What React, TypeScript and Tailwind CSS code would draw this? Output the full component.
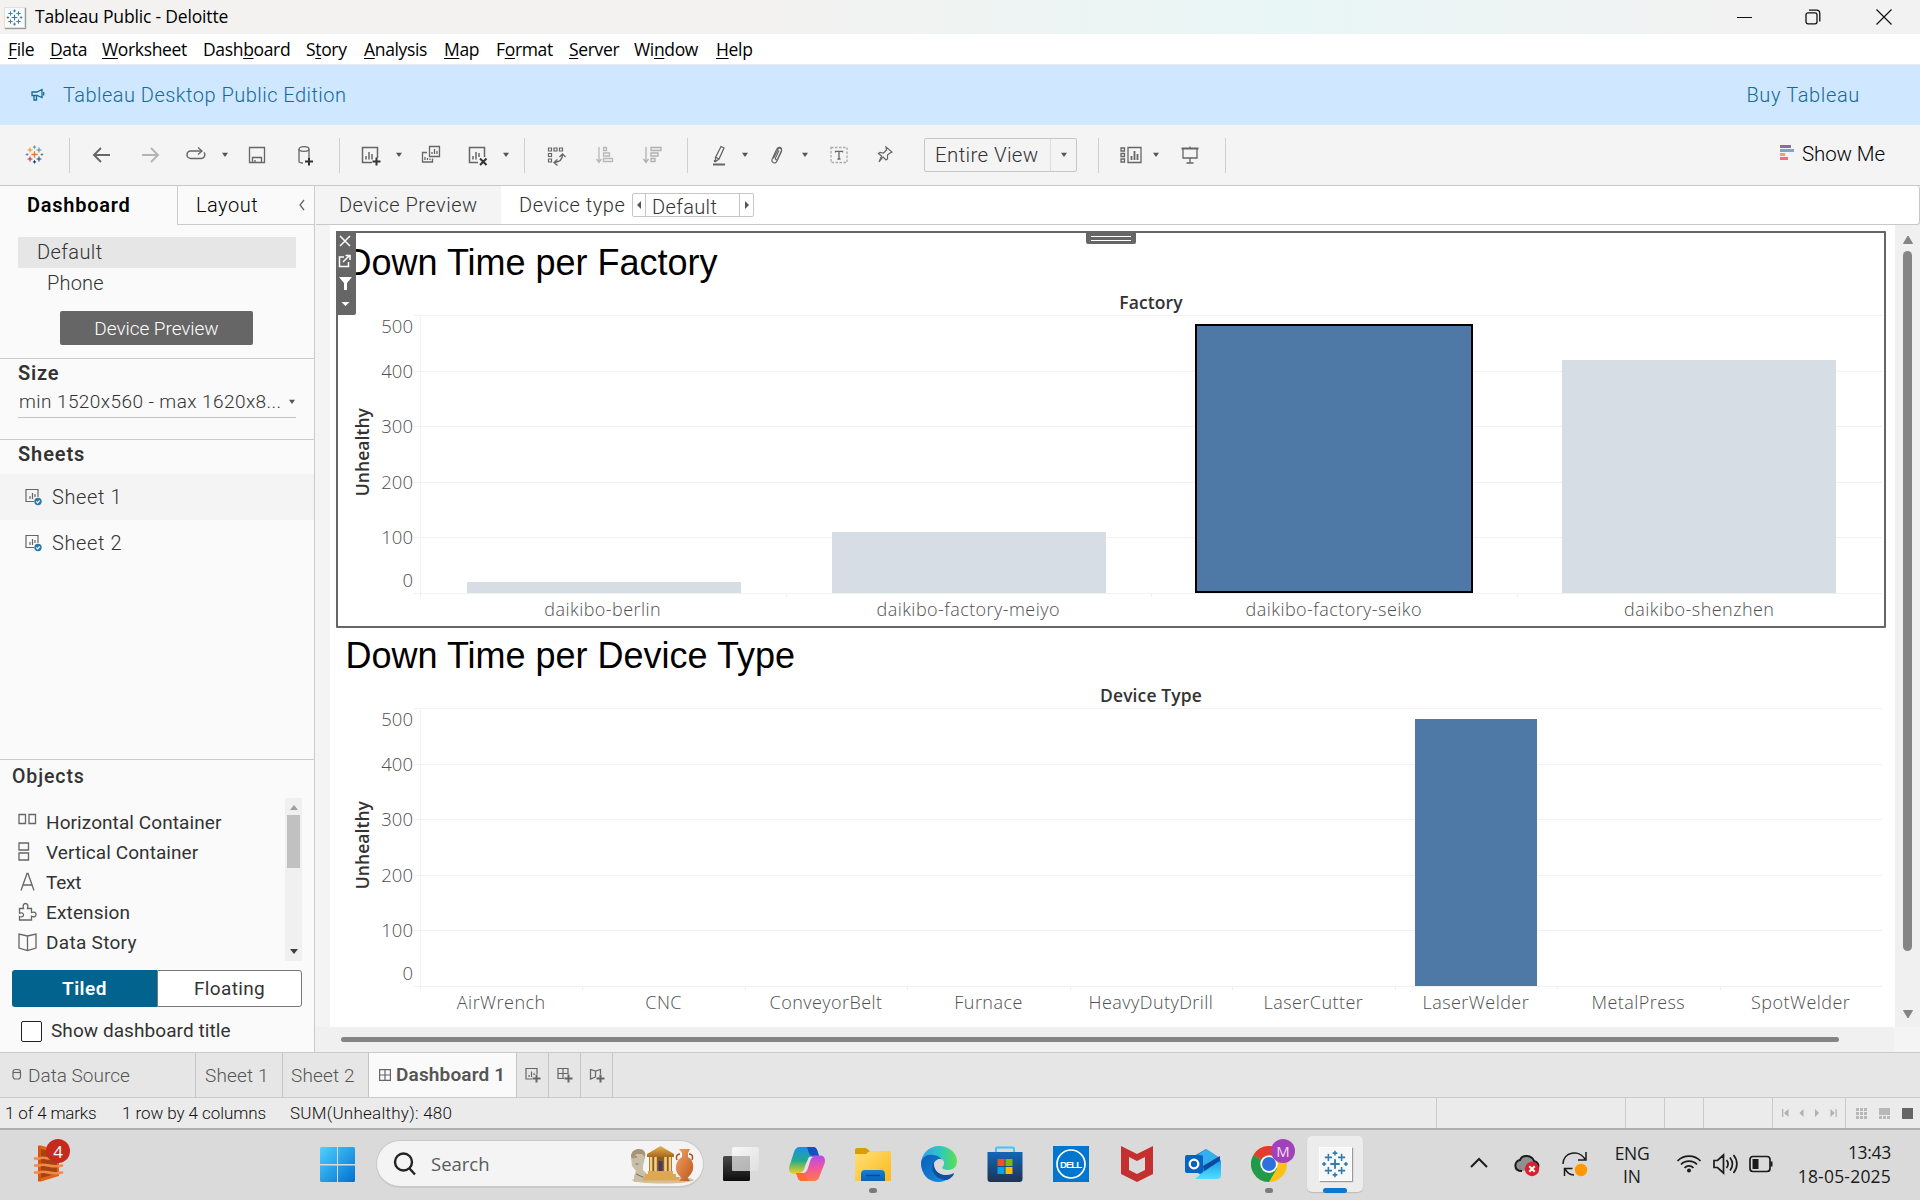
import React from "react";

type P = { children?: React.ReactNode; className?: string };

function Ico({ children, className = "", size = 24 }: P & { size?: number }) {
  return (
    <svg
      width={size}
      height={size}
      viewBox={`0 0 ${size} ${size}`}
      fill="none"
      stroke="#666"
      strokeWidth="1.3"
      className={"block shrink-0 " + className}
    >
      {children}
    </svg>
  );
}

function Caret({ className = "" }: P) {
  return (
    <svg width="8" height="6" viewBox="0 0 8 6" className={"block shrink-0 " + className}>
      <path d="M1 .8h6L4 5z" fill="#555" />
    </svg>
  );
}

function Sep({ className = "" }: P) {
  return <div className={"h-[35px] w-px shrink-0 bg-[#cfcfcf] " + className} />;
}

function TableauMark({ size, colors, className = "" }: { size: number; colors: string[]; className?: string }) {
  const cross = (x: number, y: number, r: number) => `M${x - r} ${y}h${2 * r}M${x} ${y - r}v${2 * r}`;
  return (
    <svg width={size} height={size} viewBox="0 0 36 36" fill="none" strokeWidth="2" className={"block shrink-0 " + className}>
      <path d={cross(18, 18, 6)} stroke={colors[0]} strokeWidth="2.4" />
      <path d={cross(9.5, 9.5, 4.6)} stroke={colors[1]} />
      <path d={cross(26.5, 9.5, 4.6)} stroke={colors[2]} />
      <path d={cross(9.5, 26.5, 4.6)} stroke={colors[3]} />
      <path d={cross(26.5, 26.5, 4.6)} stroke={colors[4]} />
      <path d={cross(18, 4, 3)} stroke={colors[5]} />
      <path d={cross(18, 32, 3)} stroke={colors[4]} />
      <path d={cross(4, 18, 2.6)} stroke={colors[6]} />
      <path d={cross(32, 18, 2.6)} stroke={colors[6]} />
    </svg>
  );
}

const BLUE = ["#2f7cae", "#2f7cae", "#2f7cae", "#2f7cae", "#2f7cae", "#2f7cae", "#2f7cae"];
const MULTI = ["#e8762c", "#eb912c", "#5b879b", "#c72035", "#1f447e", "#7099a6", "#59879b"];

function TitleBar() {
  return (
    <div className="flex h-[34px] items-center bg-linear-to-r from-[#f3f2f1] from-40% via-[#e8f6f5] via-67% to-[#f2f2f2] to-90% pl-1">
      <div className="flex h-[21px] w-[21px] items-center justify-center border border-[#e0e0e0] bg-[#fafafa] shadow-[1px_1px_1px_#999]">
        <TableauMark size={17} colors={BLUE} />
      </div>
      <span className="ml-[10px] pb-px text-[17.5px] leading-none tracking-[-0.17px] text-black">Tableau Public - Deloitte</span>
      <div className="ml-auto flex items-center pr-[28px]">
        <svg width="15" height="16" viewBox="0 0 15 16" stroke="#111" className="block"><path d="M0 8.500h15" /></svg>
        <svg width="16" height="16" viewBox="0 0 16 16" fill="none" stroke="#111" strokeWidth="1.3" className="ml-[53px] block">
          <rect x="1" y="3.8" width="11" height="11" rx="2" />
          <path d="M4 1.200h7.500a3.300 3.300 0 0 1 3.300 3.300v8" />
        </svg>
        <svg width="16" height="16" viewBox="0 0 16 16" stroke="#111" strokeWidth="1.2" className="ml-[55px] block"><path d="M.5.5l15 15M15.500.5l-15 15" /></svg>
      </div>
    </div>
  );
}

const MENUS: [string, string, string, string][] = [
  ["", "F", "ile", "w-[42px]"],
  ["", "D", "ata", "w-[52px]"],
  ["", "W", "orksheet", "w-[101px]"],
  ["Dash", "b", "oard", "w-[103px]"],
  ["S", "t", "ory", "w-[58px]"],
  ["", "A", "nalysis", "w-[80px]"],
  ["", "M", "ap", "w-[52px]"],
  ["F", "o", "rmat", "w-[73px]"],
  ["", "S", "erver", "w-[65px]"],
  ["Wi", "n", "dow", "w-[82px]"],
  ["", "H", "elp", "w-[60px]"],
];

function MenuBar() {
  return (
    <div className="flex h-[31px] items-center border-b border-[#ececec] bg-white pt-px pl-2 text-[17.5px] leading-none tracking-[-0.34px] text-black">
      {MENUS.map(([a, u, b, w], i) => (
        <span key={i} className={"shrink-0 whitespace-nowrap " + w}>
          {a}
          <span className="underline decoration-1 underline-offset-2">{u}</span>
          {b}
        </span>
      ))}
    </div>
  );
}

function Banner() {
  return (
    <div className="flex h-[60px] items-center bg-[#cfe8ff] pl-[31px] font-[Roboto] text-[20px] leading-none font-light text-[#146a99]">
      <svg width="14" height="14" viewBox="0 0 14 14" fill="none" stroke="#1a6a9c" strokeWidth="1.3">
        <path d="M1 4h5l5-2.500v8L6 7.500H1zM3 7.500V12h2.500V7.500M12.700 4v3.500" />
      </svg>
      <span className="ml-[18px] tracking-[0.47px]">Tableau Desktop Public Edition</span>
      <span className="mr-[60px] ml-auto tracking-[0.65px]">Buy Tableau</span>
    </div>
  );
}

function Toolbar() {
  return (
    <div className="flex h-[61px] items-center border-b border-[#c8c8c8] bg-[#f4f4f4] pl-[22px]">
      <div className="flex w-6 justify-center pb-px"><TableauMark size={19} colors={MULTI} /></div>
      <Sep className="ml-[23px]" />
      <Ico className="mb-px ml-5"><path d="M20 12H5M11 5l-7 7 7 7" strokeWidth="1.900" /></Ico>
      <Ico className="mb-px ml-6"><path d="M4 12h15M13 5l7 7-7 7" stroke="#b4b4b4" strokeWidth="1.900" /></Ico>
      <Ico className="mb-px ml-[22px]"><path d="M18 8H6.700a3.700 3.700 0 0 0 0 7.400h10.600a3.700 3.700 0 0 0 2.800-6" strokeWidth="1.500" /><path d="M14 4.500L18 8l-4 3.500" /></Ico>
      <Caret className="ml-[13px]" />
      <Ico className="ml-4"><path d="M4.500 4.500h15v15h-15zM7.500 19.500v-5h9v5M10 19.500v-2.500" /></Ico>
      <Ico className="ml-[23px]"><path d="M7 6v12.500c0 1 2 1.500 4 1.500M17 6v8" /><ellipse cx="12" cy="6" rx="5" ry="2.300" /><path d="M17 14.500v8M13 18.500h8" stroke="#333" strokeWidth="2" /></Ico>
      <Sep className="ml-[23px]" />
      <Ico className="ml-[18px]"><path d="M14 19.500H4.500v-15h15V15M8 16.500V13M11 16.500V9M14 16.500V11" strokeWidth="1.500" /><path d="M18.500 14.500v8M14.500 18.500h8" stroke="#333" strokeWidth="2" /></Ico>
      <Caret className="ml-[13px]" />
      <Ico className="ml-4"><path d="M10.500 3.500h10v10h-10zM13 11V9M15.500 11V6M18 11V8M8 9.500H3.500v9.500h10v-3.500M6 17v-3M8.500 17v-2M11 17v-1.500" /></Ico>
      <Ico className="ml-[22px]"><path d="M13 19.500H4.500v-15h15V14M8 16.500V13M11 16.500V9M14 14V10" strokeWidth="1.500" /><path d="M15 15.500l6.500 6.500M21.500 15.500L15 22" stroke="#333" strokeWidth="2" /></Ico>
      <Caret className="ml-[13px]" />
      <Sep className="ml-[14px]" />
      <Ico className="ml-[19px]"><path d="M4.500 5h3v3h-3zM10 5h3v3h-3zM15.500 5h3v3h-3zM4.500 10.500h3v3h-3zM4.500 16h3v3h-3z" strokeWidth="1.200" /><path d="M18.500 11.500c0 4.500-3 7.500-8 8M15.500 14l3-3 3 3M13.500 16.500l-3.500 3 3.500 3" /></Ico>
      <Ico className="ml-[25px]"><path d="M6 4v15M3.500 16L6 19.500 8.500 16M10.500 4.500h3v3h-3zM10.500 10h6v3h-6zM10.500 15.500h9v3h-9z" stroke="#b8b8b8" /></Ico>
      <Ico className="ml-6"><path d="M5 4v15M2.500 16L5 19.500 7.500 16M10 4.500h10v3H10zM10 10h7v3h-7zM10 15.500h4v3h-4z" stroke="#b0b0b0" /></Ico>
      <Sep className="ml-[22px]" />
      <Ico className="ml-5"><path d="M13 3.500l3 1.500-5 11-3.500 2.500v-4zM7.500 14l3.300 2M6.500 17v2" /><path d="M5 21.500h12" strokeWidth="2" /></Ico>
      <Caret className="ml-[9px]" />
      <Ico className="ml-4"><path d="M9.500 15.500l4.500-9M13.800 6.500c1.200-2.500 4.800-1 3.700 2l-4.500 9.500c-1.500 3.500-6 1.500-5-1.500l4.500-10c2-3.500 6-2.500 5 1l-4 8.500c-.8 1.500-2.700.8-2-1l3.500-7.500" strokeWidth="1.100" transform="translate(-1 0)" /></Ico>
      <Caret className="ml-3" />
      <Ico className="ml-[18px]"><path d="M4 4.500h16v15H4z" stroke="#aaa" strokeDasharray="2.500 1.500" /><path d="M8.500 9.500V8.300h7v1.200M12 8.300v8M10.500 16h3" /></Ico>
      <Ico className="ml-[22px]"><path d="M13 4l6 5-2 1-2.500 2v4l-1.500 1-3-3-4 5 2.500-6-3-2.500 1.500-1 3.500.5L13.500 7z" strokeWidth="1.200" /></Ico>
      <div className="ml-[27px] flex h-[34px] w-[153px] items-center rounded-[2px] border border-[#c6c6c6] font-[Roboto] text-[20.500px] leading-none font-light text-[#333]">
        <span className="w-[125px] pl-[10px] text-[20.5px] tracking-[0.35px]">Entire View</span>
        <div className="flex h-full flex-1 items-center justify-center border-l border-[#ddd]"><Caret /></div>
      </div>
      <Sep className="ml-[21px]" />
      <Ico className="ml-5"><path d="M2 5h3.500v3H2zM2 10.500h3.500v3H2zM2 16h3.500v3H2zM9 4.500h13v15H9z" /><path d="M12.500 17v-4M15.500 17V8M18.500 17v-6" strokeWidth="1.800" /></Ico>
      <Caret className="ml-[9px]" />
      <Ico className="mb-px ml-[18px]"><path d="M3.500 5.500h17" strokeWidth="2" /><path d="M5 6v9h14V6M12 3.500V5M12 15v4.500M8.500 20h7" /></Ico>
      <Sep className="ml-[23px]" />
      <svg width="14" height="16" viewBox="0 0 14 16" className="mb-1 ml-auto block">
        <path d="M0 0h11v3H0z" fill="#85709b" /><path d="M0 4h14v3H0z" fill="#80a2cf" /><path d="M0 8h5v3H0z" fill="#f5a06a" /><path d="M0 12h8v3H0z" fill="#fb6a80" />
      </svg>
      <span className="mr-[36px] ml-2 w-[82px] pb-[2px] font-[Roboto] text-[20.5px] leading-none font-light tracking-[-0.1px] whitespace-nowrap text-black">Show Me</span>
    </div>
  );
}

function SheetIcon({ className = "" }: P) {
  return (
    <svg width="18" height="18" viewBox="0 0 18 18" fill="none" stroke="#666" strokeWidth="1.2" className={"block " + className}>
      <path d="M9 13.500H1v-12h12V9M5 11V8M7.500 11V5M10 9V6" />
      <circle cx="13" cy="13.500" r="3.700" fill="#2c7ba3" stroke="none" />
      <path d="M11.300 13.500l1.300 1.300 2-2.300" stroke="#fff" />
    </svg>
  );
}

const OBJECTS: { label: string; cls: string; icon: React.ReactNode }[] = [
  { label: "Horizontal Container", cls: "tracking-[0.08px]", icon: <path d="M1 1.500h6.500v9H1zM11 1.500h6.500v9H11z" transform="translate(0 1)" /> },
  { label: "Vertical Container", cls: "tracking-[0.07px]", icon: <path d="M1 1h9.500v7H1zM1 11h9.500v7H1z" /> },
  { label: "Text", cls: "tracking-[-0.2px]", icon: <path d="M3 18.500L9 1.500h1l6 17M5 13h9" /> },
  { label: "Extension", cls: "tracking-[0.15px]", icon: <path d="M1.500 6.500h4c-1-3 0-5 2-5s3 2 2 5h4v4c3-1 4.500 0 4.500 2s-2 2.800-4.500 1.800v3.700H1.500v-3.500c3 1 4-.3 4-1.800s-1.500-2.500-4-1.500z" /> },
  { label: "Data Story", cls: "tracking-[0.3px]", icon: <path d="M9.500 4L1 2v14l8.500 2.500L18 16V2zM9.500 4v14" /> },
];

function Sidebar() {
  return (
    <aside className="flex w-[315px] shrink-0 flex-col border-r border-[#cbcbcb] bg-[#fafafa] font-[Roboto] leading-none text-[#333]">
      <div className="flex h-[39px] shrink-0 text-[20px] text-black">
        <div className="flex w-[177px] items-center pb-[2px] pl-[27px] font-semibold tracking-[0.75px]">Dashboard</div>
        <div className="flex flex-1 items-center border-b border-l border-[#cbcbcb] pl-[18px] font-light tracking-[0.5px]">
          Layout
          <svg width="8" height="12" viewBox="0 0 8 12" fill="none" stroke="#666" strokeWidth="1.3" className="mr-2 ml-auto"><path d="M6 1L2 6l4 5" /></svg>
        </div>
      </div>
      <div className="h-[134px] shrink-0 border-b border-[#cbcbcb] pt-3 pl-[18px] text-[20px] font-light">
        <div className="flex h-[31px] w-[278px] items-center bg-[#e6e6e6] pb-[2px] pl-[19px] tracking-[0.4px]">Default</div>
        <div className="flex h-[31px] items-center pb-[2px] pl-[29px] tracking-[0.2px]">Phone</div>
        <div className="mt-3 ml-[42px] flex h-[34px] w-[193px] items-center justify-center rounded-[2px] bg-[#666] text-[19px] tracking-[-0.05px] text-white">Device Preview</div>
      </div>
      <div className="h-[81px] shrink-0 border-b border-[#cbcbcb] pt-[3px] pl-[18px]">
        <div className="text-[20px] leading-[22px] font-semibold tracking-[0.8px]">Size</div>
        <div className="mt-[9px] flex h-[25px] w-[278px] items-center justify-between border-b border-[#c4c4c4] pb-[7px] pl-px text-[19px] font-light whitespace-nowrap">
          <span className="tracking-[0.43px]">min 1520x560 - max 1620x8...</span>
          <Caret />
        </div>
      </div>
      <div className="h-[320px] shrink-0 border-b border-[#cbcbcb]">
        <div className="h-[34px] pt-[3px] pl-[18px] text-[20px] leading-[22px] font-semibold tracking-[0.9px]">Sheets</div>
        <div className="flex h-[46px] items-center bg-[#f4f4f4] pl-[25px] text-[20px] font-light tracking-[0.6px]"><SheetIcon className="mr-[9px]" />Sheet 1</div>
        <div className="flex h-[46px] items-center pl-[25px] text-[20px] font-light tracking-[0.6px]"><SheetIcon className="mr-[9px]" />Sheet 2</div>
      </div>
      <div className="flex flex-1 flex-col pl-3 text-[19px]">
        <div className="mt-[6px] h-[32px] text-[19.5px] leading-[22px] font-medium tracking-[0.9px]">Objects</div>
        <div className="flex h-[163px] w-[290px]">
          <ul className="flex-1 pt-[9px]">
            {OBJECTS.map((o) => (
              <li key={o.label} className="flex h-[30px] items-center pl-[6px]">
                <svg width="19" height="20" viewBox="0 0 19 20" fill="none" stroke="#666" strokeWidth="1.3" className="mr-[9px] block shrink-0">{o.icon}</svg>
                <span className={o.cls}>{o.label}</span>
              </li>
            ))}
          </ul>
          <div className="flex w-[17px] flex-col items-center bg-[#f0f0f0]">
            <svg width="8" height="5" viewBox="0 0 8 5" className="mt-[7px] block"><path d="M0 5h8L4 0z" fill="#a0a0a0" /></svg>
            <div className="mt-[5px] h-[53px] w-[13px] bg-[#c1c1c1]" />
            <svg width="8" height="5" viewBox="0 0 8 5" className="mt-auto mb-[7px] block"><path d="M0 0h8L4 5z" fill="#404040" /></svg>
          </div>
        </div>
        <div className="mt-[9px] flex h-[37px] w-[290px] text-[19px]">
          <div className="flex w-[145px] items-center justify-center rounded-l-[3px] bg-[#03638f] font-semibold tracking-[0.5px] text-white">Tiled</div>
          <div className="flex flex-1 items-center justify-center rounded-r-[3px] border border-[#777] bg-white tracking-[0.35px]">Floating</div>
        </div>
        <div className="mt-[14px] ml-[9px] flex h-[21px] items-center">
          <div className="h-[21px] w-[21px] rounded-[2px] border border-[#222] bg-white" />
          <span className="ml-[9px] pb-[2px] tracking-[0.07px]">Show dashboard title</span>
        </div>
      </div>
    </aside>
  );
}

type Bar = { label: string; value: number; state?: "selected" | "faded" };

const FACTORIES: Bar[] = [
  { label: "daikibo-berlin", value: 11, state: "faded" },
  { label: "daikibo-factory-meiyo", value: 61, state: "faded" },
  { label: "daikibo-factory-seiko", value: 269, state: "selected" },
  { label: "daikibo-shenzhen", value: 233, state: "faded" },
];

const DEVICES: Bar[] = ["AirWrench", "CNC", "ConveyorBelt", "Furnace", "HeavyDutyDrill", "LaserCutter", "LaserWelder", "MetalPress", "SpotWelder"].map(
  (label) => ({ label, value: label === "LaserWelder" ? 267 : 0 }),
);

function Chart({ title, axis, bars }: { title: string; axis: string; bars: Bar[] }) {
  return (
    <div className="flex h-[393px] flex-col">
      <h2 className="h-[58px] pt-[9px] pl-[9.500px] font-['Liberation_Sans'] text-[36px] leading-[41px] whitespace-nowrap text-black">{title}</h2>
      <div className="ml-[84px] flex h-[24px] w-[1462px] items-center justify-center pb-px text-[17.5px] leading-none font-semibold tracking-[0.12px] text-[#333]">{axis}</div>
      <div className="flex">
        <div className="flex h-[275px] w-[37px] items-center justify-end">
          <span className="mr-[2px] rotate-180 text-[17.5px] leading-none font-semibold tracking-[0.05px] text-[#333] [writing-mode:vertical-rl]">Unhealthy</span>
        </div>
        <div className="flex w-[40px] flex-col items-end pt-[2px] text-[18.5px] leading-[18px] font-light text-[#4f4f4f]">
          <span>500</span>
          <span className="mt-[27px]">400</span>
          <span className="mt-[37px]">300</span>
          <span className="mt-[38px]">200</span>
          <span className="mt-[37px]">100</span>
          <span className="mt-[25px]">0</span>
        </div>
        <div className="flex w-[1469px] flex-col">
          <div className="relative h-[279px] pl-[7px]">
            <div className="absolute inset-0 flex flex-col">
              <div className="h-[56px] border-t border-[#f1f1f1]" />
              <div className="h-[55px] border-t border-[#f1f1f1]" />
              <div className="h-[56px] border-t border-[#f1f1f1]" />
              <div className="h-[55px] border-t border-[#f1f1f1]" />
              <div className="h-[57px] border-y border-[#f1f1f1]" />
            </div>
            <div className="relative flex h-full items-end border-l border-[#f1f1f1] pb-px">
              {bars.map((b) => (
                <div key={b.label} className="flex h-full flex-1 items-end justify-center">
                  <div
                    className={
                      b.state === "selected"
                        ? "w-[278px] border-2 border-black bg-[#4e79a7]"
                        : b.state === "faded"
                          ? "w-3/4 bg-[#d6dde5]"
                          : "w-3/4 bg-[#4e79a7]"
                    }
                    style={{ height: b.value }}
                  />
                </div>
              ))}
            </div>
          </div>
          <div className="ml-[7px] flex">
            {bars.map((b) => (
              <div key={b.label} className="flex-1">
                <div className="h-[3px] border-l border-[#eee]" />
                <div className="text-center text-[18px] leading-[24px] font-light tracking-[0.45px] whitespace-nowrap text-[#4f4f4f]">{b.label}</div>
              </div>
            ))}
          </div>
        </div>
      </div>
    </div>
  );
}

function Canvas() {
  return (
    <main className="flex min-w-0 flex-1 flex-col bg-[#f4f4f4]">
      <div className="ml-px flex h-[39px] shrink-0 rounded-r-[3px] border-r border-b border-[#c8c8c8] bg-white font-[Roboto] text-[20px] leading-none font-light text-[#333]">
        <div className="flex w-[185px] items-center bg-[#f4f4f4] pl-[23px] tracking-[0.5px]">Device Preview</div>
        <div className="flex items-center pl-[18px]">
          <span className="w-[113px] tracking-[0.55px]">Device type</span>
          <div className="flex h-[24px] w-[122px] rounded-[2px] border border-[#c6c6c6]">
            <div className="flex w-[13px] items-center justify-center border-r border-[#c6c6c6]"><svg width="4" height="8" viewBox="0 0 4 8"><path d="M4 0v8L0 4z" fill="#555" /></svg></div>
            <div className="flex-1 pl-[6px] leading-[26px] tracking-[0.35px]">Default</div>
            <div className="flex w-[14px] items-center justify-center border-l border-[#c6c6c6]"><svg width="4" height="8" viewBox="0 0 4 8"><path d="M0 0v8l4-4z" fill="#555" /></svg></div>
          </div>
        </div>
      </div>
      <div className="flex h-[802px] shrink-0">
        <div className="ml-[15px] w-[1565px] bg-white pt-[6px] pl-[6px]">
          <div className="relative -mb-[2px] h-[397px] w-[1550px] rounded-[1px] outline-2 -outline-offset-2 outline-[#666]">
            <div className="pt-[2px]"><Chart title="Down Time per Factory" axis="Factory" bars={FACTORIES} /></div>
            <div className="absolute top-0 left-0 flex h-[84px] w-5 flex-col items-center rounded-br-[2px] bg-[#666]">
              <svg width="20" height="84" viewBox="0 0 20 84" fill="none" stroke="#fff" strokeWidth="1.5">
                <path d="M4 5l10 10M14 5L4 15M8 26H3.500v9.500h9V31M7 31l6-6M9.500 24.500H14v4.500" />
                <path d="M3 46h13l-5 6v7H8v-7z" fill="#fff" stroke="none" />
                <path d="M5.500 71h8l-4 4z" fill="#fff" stroke="none" />
              </svg>
            </div>
            <div className="absolute top-0 left-[750px] flex h-[13px] w-[50px] flex-col items-center gap-[3px] rounded-b-[2px] bg-[#666] pt-[5px]">
              <div className="h-px w-10 bg-white" />
              <div className="h-px w-10 bg-white" />
            </div>
          </div>
          <Chart title="Down Time per Device Type" axis="Device Type" bars={DEVICES} />
        </div>
        <div className="flex w-[25px] flex-col items-center bg-[#f0f0f0]">
          <svg width="12" height="9" viewBox="0 0 12 9" className="mt-[10px] block"><path d="M1.500 8.500h9L6 1z" fill="#858585" stroke="#858585" strokeLinejoin="round" /></svg>
          <div className="mt-[7px] h-[700px] w-[9px] rounded-full bg-[#858585]" />
          <svg width="12" height="9" viewBox="0 0 12 9" className="mt-auto mb-2 block"><path d="M1.500.5h9L6 8z" fill="#858585" stroke="#858585" strokeLinejoin="round" /></svg>
        </div>
      </div>
      <div className="flex h-[25px]">
        <div className="flex w-[1579px] items-center bg-[#f0f0f0] pl-[26px]"><div className="h-[5px] w-[1498px] rounded-full bg-[#858585]" /></div>
      </div>
    </main>
  );
}

function AddTab({ d }: { d: string }) {
  return (
    <div className="flex w-8 items-center justify-center border-r border-[#c4c4c4]">
      <svg width="16" height="16" viewBox="0 0 16 16" fill="none" stroke="#666" strokeWidth="1.2" className="mb-px">
        <path d={d} />
        <path d="M11.500 7.500v8M7.500 11.500h8" strokeWidth="2" />
      </svg>
    </div>
  );
}

function SheetTabs() {
  return (
    <div className="flex h-[46px] shrink-0 border-y border-[#cacaca] bg-[#e6e6e6] font-[Roboto] text-[19px] leading-none font-light text-[#555]">
      <div className="flex w-[196px] items-center border-r border-[#c4c4c4] pl-3">
        <svg width="10" height="13" viewBox="0 0 10 13" fill="none" stroke="#666" strokeWidth="1.2" className="mr-[6px] mb-[2px]"><rect x="1" y="1.500" width="7.500" height="9.500" rx="2.500" /><path d="M1 4.500h7.500" /></svg>
        <span>Data Source</span>
      </div>
      <div className="flex w-[87px] items-center border-r border-[#c4c4c4] pl-[9px] tracking-[0.15px]">Sheet 1</div>
      <div className="flex w-[86px] items-center border-r border-[#c4c4c4] pl-2 tracking-[0.15px]">Sheet 2</div>
      <div className="flex w-[148px] items-center border-r border-[#c4c4c4] bg-[#fafafa] pl-[10px] font-semibold">
        <svg width="12" height="12" viewBox="0 0 12 12" fill="none" stroke="#666" strokeWidth="1.2" className="mr-[5px]"><path d="M.6.600h10.800v10.800H.6zM6 .600v10.800M.600 6h10.800" /></svg>
        <span className="pb-[2px] tracking-[0.15px] whitespace-nowrap">Dashboard 1</span>
      </div>
      <AddTab d="M7 12H1V1.500h11V7M4 10V8M6.500 10V4.500M9 8V6" />
      <AddTab d="M7 11.500H1v-10h10V7M6 1.500v10M1 6.500h10" />
      <AddTab d="M6.500 10L1.500 12V2.500L6.500 4l5-1.500V7M6.500 4v6" />
    </div>
  );
}

function StatusBar() {
  return (
    <div className="flex h-[32px] shrink-0 border-b-2 border-[#b0b0b0] bg-[#ebebeb] font-[Roboto] text-[17px] leading-none text-[#111]">
      <div className="flex w-[1437px] items-center border-r border-[#cacaca] pl-[5px] font-light">
        <span className="w-[117px] tracking-[-0.15px]">1 of 4 marks</span>
        <span className="w-[168px] tracking-[-0.07px]">1 row by 4 columns</span>
        <span className="tracking-[0.25px]">SUM(Unhealthy): 480</span>
      </div>
      <div className="w-[189px] border-r border-[#cacaca]" />
      <div className="w-[39px] border-r border-[#cacaca]" />
      <div className="w-[39px] border-r border-[#cacaca]" />
      <div className="w-[69px] border-r border-[#cacaca]" />
      <div className="flex w-[73px] items-center border-r border-[#cacaca] pl-[9px]">
        <svg width="56" height="10" viewBox="0 0 56 10" fill="#b0b0b0"><path d="M0 1h1.300v8H0zM6.500 1v8L2 5zM21.500 1v8L17.500 5zM33 1v8l4-4zM48.500 1v8l4-4zM53.500 1h1.200v8h-1.200z" /></svg>
      </div>
      <div className="flex flex-1 items-center gap-3 pl-[10px]">
        <svg width="11" height="11" viewBox="0 0 11 11" fill="#b8b8b8"><path d="M0 0h3v3H0zM4 0h3v3H4zM8 0h3v3H8zM0 4h3v3H0zM4 4h3v3H4zM8 4h3v3H8zM0 8h3v3H0zM4 8h3v3H4zM8 8h3v3H8z" /></svg>
        <svg width="11" height="11" viewBox="0 0 11 11" fill="#b8b8b8"><path d="M0 0h11v7H0zM0 8h3v3H0zM4 8h3v3H4zM8 8h3v3H8z" /></svg>
        <div className="h-[11px] w-[11px] bg-[#666]" />
      </div>
    </div>
  );
}

function TaskIcon({ children, running }: P & { running?: boolean }) {
  return (
    <div className="relative flex w-[66px] items-center justify-center">
      <svg width="36" height="36" viewBox="0 0 36 36" className="mb-[2px]">{children}</svg>
      {running && <div className="absolute bottom-[7px] left-[29px] h-[5px] w-[8px] rounded-full bg-[#7b7b7b]" />}
    </div>
  );
}

function Defs() {
  const g = (id: string, a: string, b: string, x2 = 1, y2 = 1, mid?: string) => (
    <linearGradient id={id} x1="0" y1="0" x2={x2} y2={y2}>
      <stop offset="0" stopColor={a} />
      {mid && <stop offset=".5" stopColor={mid} />}
      <stop offset="1" stopColor={b} />
    </linearGradient>
  );
  return (
    <svg className="absolute h-0 w-0">
      <defs>
        {g("win", "#4fd0ff", "#0071d0")}
        {g("dark", "#4a4a4a", "#0c0c0c", 0)}
        {g("light", "#ffffff", "#e0e0e0")}
        {g("copA", "#1a8fe8", "#f6d21c", 0, 1, "#24a98d")}
        {g("copB", "#b14bf0", "#ff7a4a", 0, 1, "#f0569a")}
        {g("fold", "#ffe07a", "#fbb917")}
        {g("foldB", "#1380d8", "#0b62b4", 0)}
        {g("edgeT", "#2f9fe8", "#5be04f", 1, 0, "#2cc5c8")}
        {g("edgeB", "#0c5cb8", "#1490e0")}
        {g("store", "#1068b8", "#20324f", 0)}
        {g("out", "#1a9be8", "#50e0ff", 0)}
        {g("gold", "#e8b24c", "#a6681c", 0)}
        {g("vase", "#f0a468", "#c0551c")}
      </defs>
    </svg>
  );
}

function Taskbar() {
  return (
    <div className="flex h-[70px] shrink-0 bg-[#dadada] font-['Open_Sans',sans-serif] text-[17px] leading-none text-[#1b1b1b]">
      <Defs />
      <div className="relative w-[320px]">
        <svg width="32" height="38" viewBox="0 0 32 38" className="mt-[15px] ml-8">
          <path d="M6 .5h3L27 5v26L9 36.500H6z" fill="#e0641c" />
          <path d="M9 4l16 3.500v21L9 33z" fill="#a8420e" />
          <path d="M6 1h3v35H6z" fill="#d9540f" />
          <g fill="none" stroke="#f08a4c" strokeWidth="2.600" strokeLinecap="round">
            <path d="M3 13.500h4c6-3 12 3 23 1M3 20.500h4c6-3 12 3 23 0M3 27.500h4c6-3 12 3 23 0" />
          </g>
        </svg>
        <div className="absolute top-[9px] left-[46px] flex h-6 w-6 items-center justify-center rounded-full bg-[#c62a1e] text-[17px] text-white">4</div>
      </div>
      <svg width="35" height="70" viewBox="0 0 35 70" className="shrink-0" fill="url(#win)"><path d="M0 18.500a1.500 1.500 0 0 1 1.500-1.500H17v17H0zM18 17h15.500a1.500 1.500 0 0 1 1.500 1.500V34H18zM0 35.500h17V52H1.500A1.500 1.500 0 0 1 0 50.500zM18 35.500h17v15a1.500 1.500 0 0 1-1.500 1.500H18z" /></svg>
      <div className="mt-[10px] ml-[21px] flex h-[48px] w-[328px] shrink-0 items-center rounded-full border border-b-2 border-[#c9c9c9] bg-[#f4f4f4] pl-4">
        <svg width="24" height="24" viewBox="0 0 24 24" fill="none" stroke="#222" strokeWidth="2.4"><circle cx="10.500" cy="10" r="8.500" /><path d="M16.500 16.500l5.500 6" /></svg>
        <span className="ml-[14px] pt-px text-[18.5px] text-[#5a5a5a]">Search</span>
        <svg width="66" height="40" viewBox="0 0 66 40" className="mr-[8px] ml-auto">
          <ellipse cx="34" cy="36" rx="31" ry="3.500" fill="#c9a77a" opacity=".7" />
          <path d="M2 14c0-6 4-8 8-8s7 3 6 8l-2 8v4l4 4v8H5v-6l2-5-4-5z" fill="#c9bfa8" />
          <path d="M2 13c0-6 4-8 8-8 5 0 7 3 6 8l-3-3H7l-2 5z" fill="#a39575" />
          <path d="M6 13h2M6.500 20h3M7 30l9 4" stroke="#7d7055" />
          <path d="M18 10L31.500 2 45 10v3H18z" fill="url(#gold)" />
          <path d="M20 13h23v15H20z" fill="#8d5e20" />
          <path d="M22 13v15M26.500 13v15M36.500 13v15M41 13v15" stroke="#f0cf86" strokeWidth="2.600" />
          <path d="M29.500 17h4v11h-4z" fill="#4a3560" />
          <path d="M19 27h25v3H19zM16 30h31v3H16zM14 33h36v3.500H14z" fill="#dca850" />
          <path d="M50 5h11l-2 4v4c4 2 6 7 5 12s-4 7-5.500 9l2.500 3H50l2.500-3C51 32 47.500 30 47 25s2-10 6-12V9z" fill="url(#vase)" />
          <path d="M51 10c-4 0-4 4-3 6M60 10c4 0 4 4 3 6" stroke="#b0521c" strokeWidth="1.500" fill="none" />
        </svg>
      </div>
      <div className="ml-[4px] flex shrink-0">
        <TaskIcon>
          <rect x="0" y="10" width="27" height="25" rx="1.500" fill="url(#dark)" />
          <rect x="9" y="1" width="27" height="24" rx="1.500" fill="url(#light)" opacity=".82" />
          <path d="M9 10h18v15H9z" fill="#aaa" opacity=".55" />
        </TaskIcon>
        <TaskIcon>
          <path d="M11 1h13c3 0 4 2 4.800 5l1.200 4h-6c-3 0-4 1-5 4l-3 9c-1 3-2.500 5-6 5H5c-4 0-6-3-4.500-8L5 6c1-3 2.500-5 6-5z" fill="url(#copA)" />
          <path d="M18 1h6c3 0 4 2 4.800 5l1.200 4h-5.500c-3 0-4-1-4.700-3.500z" fill="#1650c0" />
          <path d="M25 35H13c-3 0-4-2-4.800-5L7 27h5c3 0 4-1 5-4l3-9c1-3 2.500-4.500 6-4.500h5c4 0 6 3 4.500 8L31 29c-1 3.500-2.500 6-6 6z" fill="url(#copB)" />
          <path d="M19 35h-6c-3 0-4-2-4.800-5L7 27h6c3 0 3.500 1 4 3z" fill="#ff6a35" />
          <path d="M20 11h5c-3 0-3.500 3-5 8-1.500 4.500-2 7-5 8h-4c3-1 4-3 5-7z" fill="#e6e0ea" />
        </TaskIcon>
        <TaskIcon running>
          <path d="M0 4a2 2 0 0 1 2-2h9l5 4h-3l-3 5H0z" fill="#dc9c0a" />
          <path d="M0 8h11l4-3h20a1 1 0 0 1 1 1v28a1 1 0 0 1-1 1H1a1 1 0 0 1-1-1z" fill="url(#fold)" />
          <path d="M6 35V28a4 4 0 0 1 4-4h16a4 4 0 0 1 4 4v7z" fill="url(#foldB)" />
          <path d="M11 29.500h14" stroke="#0a4a8e" strokeWidth="1.500" />
        </TaskIcon>
        <TaskIcon>
          <path d="M0 18C0 8 8 0 18 0s18 7 18 15c0 6-4 9-9 9-4 0-6-1-6-2s2-2 2-5-3-6-7-6C8 11 3 16 3 24 1 22 0 20 0 18z" fill="url(#edgeT)" />
          <path d="M0 17c1-6 6-9 12-8 5 0 9 3 10 7-7-4-12 2-10 8 2 7 8 10 15 9-3 2-6 3-9 3C7 36 0 28 0 17z" fill="url(#edgeB)" />
          <path d="M12 17c-3 7 2 17 14 17 3-1 6-4 7-6 0-1-1-1-2 0-7 3-18 0-17-10z" fill="#104f9e" />
          <path d="M21 21.500c2-2 2.500-6-.5-8-3-1.500-7 1-7.500 5 0 5 4 9 9 9.500 6 .5 9-2 12-6-3 3-12 3-13-.5z" fill="#dadada" />
        </TaskIcon>
        <TaskIcon>
          <path d="M9 6V3a1.500 1.500 0 0 1 1.500-1.500h15A1.500 1.500 0 0 1 27 3v3" fill="none" stroke="#42c4f5" strokeWidth="2" />
          <path d="M.5 6h35v27a3 3 0 0 1-3 3h-29a3 3 0 0 1-3-3z" fill="url(#store)" />
          <path d="M10.500 13h7v7h-7z" fill="#f25022" /><path d="M18.500 13h7v7h-7z" fill="#7fba00" /><path d="M10.500 21h7v7h-7z" fill="#00a4ef" /><path d="M18.500 21h7v7h-7z" fill="#ffb900" />
        </TaskIcon>
        <TaskIcon>
          <path d="M0 0h36v36H0z" fill="#0076ce" />
          <circle cx="18" cy="18" r="14" fill="none" stroke="#fff" strokeWidth="1.700" />
          <text x="18" y="21.500" fontFamily="Liberation Sans" fontWeight="700" fontSize="9.500" fill="#fff" textAnchor="middle" textLength="22">DELL</text>
        </TaskIcon>
        <TaskIcon>
          <path d="M2 0l16 8L34 0v28l-16 8L2 28zM10 11v13l8 4 8-4V11l-8 4z" fill="#c4302f" fillRule="evenodd" />
        </TaskIcon>
        <TaskIcon>
          <path d="M7 11L21 3l14 9v5L18 30 7 24z" fill="#1d86d8" />
          <path d="M13 9l8-6 12 8-15 9z" fill="#35b0ee" />
          <path d="M18 20l17-10v6L20 27z" fill="#0b4a9e" />
          <path d="M10 33h22a4 4 0 0 0 4-4V14L18 26z" fill="url(#out)" />
          <rect x="0" y="9" width="18" height="18" rx="2" fill="#0a62c0" />
          <circle cx="9" cy="18" r="4.300" fill="none" stroke="#fff" strokeWidth="2.300" />
        </TaskIcon>
        <div className="relative flex">
          <TaskIcon running>
            <circle cx="18" cy="18" r="18" fill="#fbc116" />
            <path d="M18 18L2.400 9A18 18 0 0 1 33.600 9z" fill="#e33b2e" />
            <path d="M2.400 9A18 18 0 0 0 18 36l8-13.500-8-4.500z" fill="#229a4b" />
            <circle cx="18" cy="18" r="8.700" fill="#fff" />
            <circle cx="18" cy="18" r="7" fill="#2f6fe0" />
          </TaskIcon>
          <div className="absolute top-[9px] left-[35px] flex h-6 w-6 items-center justify-center rounded-full bg-[#a043b8] text-[15px] text-[#f1d9f5]">M</div>
        </div>
        <div className="relative flex w-[66px] justify-center">
          <div className="mt-[6px] flex h-[56px] w-[56px] items-center justify-center rounded-[5px] bg-[#ececec] shadow-[0_1px_1px_#bbb]">
            <div className="flex h-[34px] w-[33px] items-center justify-center border border-white bg-[#f7f7f7] shadow-[1px_1px_1px_#999]"><TableauMark size={28} colors={BLUE} /></div>
          </div>
          <div className="absolute bottom-[7px] left-[21px] h-[5px] w-6 rounded-full bg-[#0a78d4]" />
        </div>
      </div>
      <svg width="128" height="70" viewBox="1465 1130 128 70" fill="none" stroke="#1b1b1b" strokeWidth="2" className="ml-[97px] shrink-0">
        <path d="M1471 1167l8-8 8 8" />
        <path d="M1522 1171c-9 0-8-10-2-11 2-6 12-5 14 1 4 1 5 4 4 7" fill="#909090" />
        <circle cx="1532" cy="1169" r="7.200" fill="#d9202e" stroke="none" />
        <path d="M1529.300 1166.300l5.400 5.400M1534.700 1166.300l-5.400 5.400" stroke="#fff" />
        <path d="M1563 1164c0-12 16-15 22-5M1586 1152v8h-8M1574 1175c-5 0-7-3-9-6M1564.500 1176v-7.500h8" strokeWidth="1.500" />
        <circle cx="1581" cy="1170" r="6.200" fill="#ff9800" stroke="none" />
      </svg>
      <div className="ml-[13px] flex w-[52px] shrink-0 flex-col items-center gap-[5px] pt-[14px] text-[17.5px] leading-[18px]">
        <span className="tracking-[-0.4px]">ENG</span>
        <span>IN</span>
      </div>
      <svg width="100" height="70" viewBox="1676 1130 100 70" fill="none" stroke="#1b1b1b" strokeWidth="1.7" className="ml-[18px] shrink-0">
        <path d="M1677.500 1161c6-6.500 17-6.500 23 0M1681 1164.500c4-4.500 12-4.500 16 0M1684.500 1168c2.500-2.800 6.500-2.800 9 0" />
        <circle cx="1689" cy="1170.500" r="2" fill="#1b1b1b" stroke="none" />
        <path d="M1714 1160.500h3.500l6-5.500v18l-6-5.500h-3.500zM1726.500 1160c2 2.500 2 5.500 0 8M1730 1157.500c3 4 3 9 0 13M1733.500 1155c4.500 5.500 4.500 12.500 0 18" />
        <rect x="1750" y="1156.500" width="20" height="15" rx="3" />
        <path d="M1752.500 1159h6v10h-6zM1770.500 1161.500h2v5h-2z" fill="#1b1b1b" stroke="none" />
      </svg>
      <div className="mr-[29px] ml-auto flex flex-col items-end gap-[6px] pt-[13px] text-[17.5px] leading-[18px] whitespace-nowrap">
        <span className="tracking-[-0.3px]">13:43</span>
        <span className="tracking-[0.2px]">18-05-2025</span>
      </div>
    </div>
  );
}

export default function App() {
  return (
    <div className="flex h-[1200px] w-[1920px] flex-col overflow-hidden bg-[#f4f4f4] font-['Open_Sans',sans-serif]">
      <TitleBar />
      <MenuBar />
      <Banner />
      <Toolbar />
      <div className="flex h-[866px] shrink-0">
        <Sidebar />
        <Canvas />
      </div>
      <SheetTabs />
      <StatusBar />
      <Taskbar />
    </div>
  );
}
